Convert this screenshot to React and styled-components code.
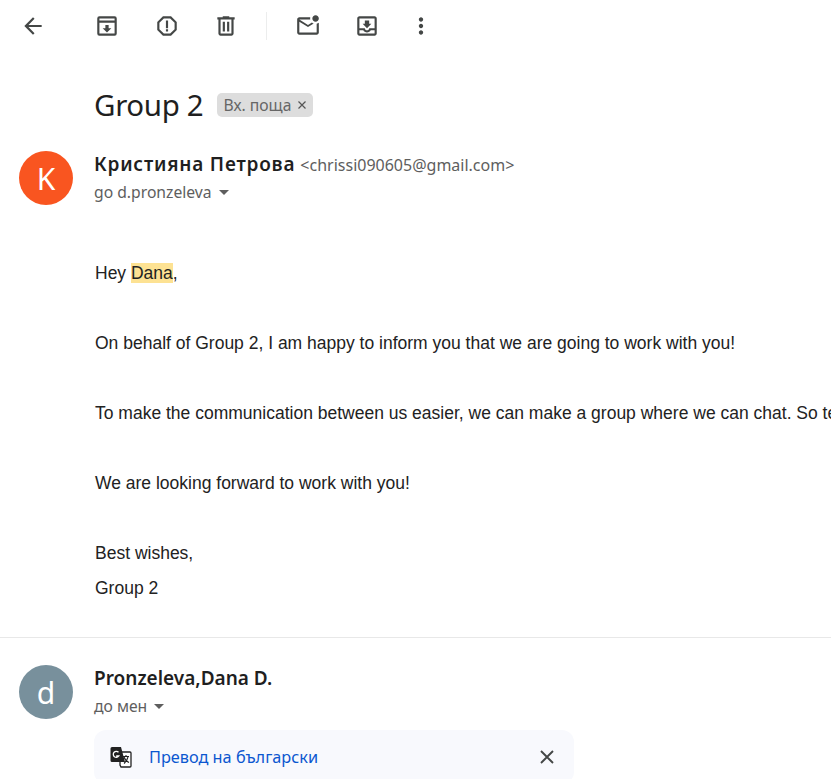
import React from "react";
import styled, { createGlobalStyle } from "styled-components";

const GlobalStyle = createGlobalStyle`
  html, body {
    margin: 0;
    padding: 0;
    background: #fff;
    overflow: hidden;
  }
`;

const Page = styled.div`
  width: 831px;
  height: 779px;
  overflow: hidden;
  font-family: "Liberation Sans", Arial, sans-serif;
  color: #222;
`;

const Toolbar = styled.div`
  display: flex;
  align-items: center;
  height: 52px;
  padding-left: 20px;
`;

const ToolIcon = styled.svg`
  width: 26px;
  height: 26px;
  flex: none;
  margin-right: ${(p) => p.$gap}px;
  fill: #444746;
  fill-rule: evenodd;
`;

const ToolDivider = styled.div`
  width: 1px;
  height: 28px;
  background: #eceded;
  margin-right: 28px;
`;

const SubjectRow = styled.div`
  display: flex;
  align-items: center;
  height: 42px;
  margin-top: 31px;
  padding-left: 94px;
`;

const Subject = styled.h1`
  margin: 0;
  font: 400 29.5px "Noto Sans", sans-serif;
  letter-spacing: -0.35px;
  color: #1f1f1f;
`;

const Label = styled.span`
  display: flex;
  align-items: center;
  gap: 7px;
  height: 24px;
  margin: 1px 0 0 14px;
  padding: 0 7px 0 6px;
  border-radius: 5px;
  background: #dddddd;
  color: #666;
  font: 400 15.7px "Noto Sans", sans-serif;
`;

const Message = styled.div`
  display: grid;
  grid-template-columns: 54px 1fr;
  column-gap: 21px;
  padding-left: 19px;
  margin-top: ${(p) => p.$top || 0}px;
`;

const Avatar = styled.div`
  width: 54px;
  height: 54px;
  border-radius: 50%;
  background: ${(p) => p.$bg};
  color: #fff;
  display: flex;
  align-items: center;
  justify-content: center;
  font: 400 30px "Noto Sans", sans-serif;
`;

const SenderLine = styled.div`
  display: flex;
  align-items: baseline;
  gap: 5px;
  height: 28px;
  line-height: 28px;
`;

const SenderName = styled.span`
  font: 600 19px "Noto Sans", sans-serif;
  letter-spacing: ${(p) => p.$spacing || 0}px;
  color: #1f1f1f;
`;

const SenderMail = styled.span`
  font: 400 16px "Noto Sans", sans-serif;
  color: #5e5e5e;
`;

const ToLine = styled.div`
  display: flex;
  align-items: center;
  gap: 7px;
  height: 22px;
  margin-top: 2px;
  font: 400 15.7px "Noto Sans", sans-serif;
  color: #5e5e5e;
`;

const Caret = styled.span`
  width: 0;
  height: 0;
  border-left: 5px solid transparent;
  border-right: 5px solid transparent;
  border-top: 5px solid #5e5e5e;
`;

const Body = styled.div`
  padding: 51px 0 0 95px;
  width: 900px;
  font-size: 17.5px;
  white-space: nowrap;
  color: #222;
`;

const Para = styled.p`
  margin: 0;
  line-height: 35px;
  height: 35px;
  margin-bottom: ${(p) => p.$after || 0}px;
`;

const Highlight = styled.span`
  background: #fde293;
`;

const Rule = styled.hr`
  margin: 31px 0 27px;
  border: 0;
  border-top: 1px solid #e8e8e8;
`;

const Translate = styled.div`
  display: flex;
  align-items: center;
  width: 480px;
  height: 54px;
  margin-top: 13px;
  padding: 0 20px 0 15px;
  box-sizing: border-box;
  background: #f8f9fd;
  border-radius: 12px;
`;

const TranslateLink = styled.a`
  flex: 1;
  margin-left: 16px;
  color: #0b57d0;
  font: 400 16.3px "Noto Sans", sans-serif;
`;

const icons = {
  back: "M20 11H7.83l5.59-5.59L12 4l-8 8 8 8 1.41-1.41L7.83 13H20v-2z",
  archive: "M19 3H5a2 2 0 0 0-2 2v14a2 2 0 0 0 2 2h14a2 2 0 0 0 2-2V5a2 2 0 0 0-2-2zM5 5h14v2H5V5zm0 14V9h14v10H5zm7-1 4-4h-2.500v-3h-3v3H8l4 4z",
  spam: "M15.73 3H8.27L3 8.27v7.46L8.27 21h7.46L21 15.730V8.270L15.730 3zM19 14.900 14.900 19H9.100L5 14.900V9.100L9.100 5h5.800L19 9.100v5.800zM11 7h2v7h-2V7zm0 8h2v2h-2v-2z",
  trash: "M15 4V3H9v1H4v2h1v13c0 1.100.900 2 2 2h10c1.100 0 2-.900 2-2V6h1V4h-5zm2 15H7V6h10v13zM9 8h2v9H9V8zm4 0h2v9h-2V8z",
  unread: "M22 8.980V18c0 1.100-.900 2-2 2H4c-1.100 0-2-.900-2-2V6c0-1.100.900-2 2-2h10.100c-.060.320-.100.660-.100 1s.040.680.100 1H4l8 5 3.670-2.300c.470.430 1.020.770 1.620 1L12 13 4 8v10h16V9.900c.740-.150 1.420-.480 2-.920zM16 5c0 1.660 1.340 3 3 3s3-1.340 3-3-1.340-3-3-3-3 1.340-3 3z",
  inbox: "M19 3H5c-1.100 0-2 .900-2 2v14c0 1.100.900 2 2 2h14c1.100 0 2-.900 2-2V5c0-1.100-.900-2-2-2zm0 16H5v-3h3.560c.690 1.190 1.970 2 3.450 2s2.750-.810 3.450-2H19v3zm0-5h-4.990c0 1.100-.900 2-2 2s-2-.900-2-2H5V5h14v9zm-3-4h-2V7h-4v3H8l4 4 4-4z",
  more: "M12 8c1.100 0 2-.900 2-2s-.900-2-2-2-2 .900-2 2 .900 2 2 2zm0 2c-1.100 0-2 .900-2 2s.900 2 2 2 2-.900 2-2-.900-2-2-2zm0 6c-1.100 0-2 .900-2 2s.900 2 2 2 2-.900 2-2-.900-2-2-2z",
};

const Tool = ({ name, gap }) => (
  <ToolIcon viewBox="0 0 24 24" $gap={gap}>
    <path d={icons[name]} />
  </ToolIcon>
);

const TranslateIcon = () => (
  <svg width="24" height="24" viewBox="0 0 24 24">
    <path d="M11 7h10a1 1 0 0 1 1 1v13a1 1 0 0 1-1 1H12l-1-2z" fill="#fff" stroke="#222" strokeWidth="1.300" />
    <path d="M3 2h9l4 15H3a1.500 1.500 0 0 1-1.500-1.500v-12A1.500 1.500 0 0 1 3 2z" fill="#222" />
    <path d="M9.500 7.300A3 3 0 1 0 9.800 11H7.200" fill="none" stroke="#fff" strokeWidth="1.300" />
    <path d="M14 11.500h6M17 10v1.500M15 12c.8 2.500 2.800 4.500 5 5.500M19 12c-.6 2.500-2 5-4 6.500" fill="none" stroke="#222" strokeWidth="1.100" />
  </svg>
);

const CloseIcon = () => (
  <svg width="14" height="14" viewBox="0 0 14 14">
    <path d="M1 1l12 12M13 1L1 13" stroke="#444746" strokeWidth="1.900" fill="none" />
  </svg>
);

const SmallClose = () => (
  <svg width="8" height="8" viewBox="0 0 8 8">
    <path d="M.5.500l7 7M7.500.500l-7 7" stroke="#555" strokeWidth="1.200" fill="none" />
  </svg>
);

const App = () => (
  <Page lang="bg">
    <GlobalStyle />
    <Toolbar>
      <Tool name="back" gap={48} />
      <Tool name="archive" gap={34} />
      <Tool name="spam" gap={33} />
      <Tool name="trash" gap={27} />
      <ToolDivider />
      <Tool name="unread" gap={33} />
      <Tool name="inbox" gap={28} />
      <Tool name="more" gap={0} />
    </Toolbar>
    <SubjectRow>
      <Subject>Group 2</Subject>
      <Label>
        Вх. поща
        <SmallClose />
      </Label>
    </SubjectRow>
    <Message $top={26}>
      <Avatar $bg="#f95520">K</Avatar>
      <div>
        <SenderLine>
          <SenderName $spacing={0.8}>Кристияна Петрова</SenderName>
          <SenderMail>&lt;chrissi090605@gmail.com&gt;</SenderMail>
        </SenderLine>
        <ToLine>
          go d.pronzeleva <Caret />
        </ToLine>
      </div>
    </Message>
    <Body>
      <Para $after={35}>
        Hey <Highlight>Dana</Highlight>,
      </Para>
      <Para $after={35}>On behalf of Group 2, I am happy to inform you that we are going to work with you!</Para>
      <Para $after={35}>To make the communication between us easier, we can make a group where we can chat. So tell us your number.</Para>
      <Para $after={35}>We are looking forward to work with you!</Para>
      <Para>Best wishes,</Para>
      <Para>Group 2</Para>
    </Body>
    <Rule />
    <Message>
      <Avatar $bg="#78909c">d</Avatar>
      <div>
        <SenderLine>
          <SenderName>Pronzeleva,Dana D.</SenderName>
        </SenderLine>
        <ToLine>
          до мен <Caret />
        </ToLine>
        <Translate>
          <TranslateIcon />
          <TranslateLink>Превод на български</TranslateLink>
          <CloseIcon />
        </Translate>
      </div>
    </Message>
  </Page>
);

export default App;
